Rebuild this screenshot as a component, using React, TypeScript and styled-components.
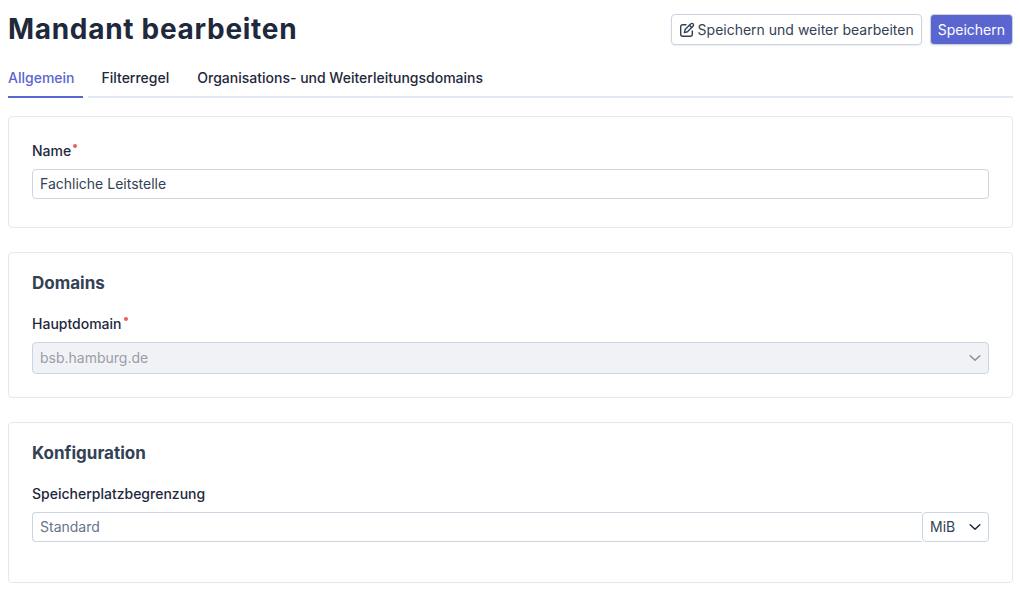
import React from 'react';
import styled, { createGlobalStyle, css } from 'styled-components';

const color = {
  primary: '#5b65d0',
  ink: '#1e293b',
  text: '#334155',
  muted: '#64748b',
  line: '#e2e8f0',
  border: '#cbd5e1',
  disabled: '#f1f2f6',
};

const GlobalStyle = createGlobalStyle`
  *, *::before, *::after { box-sizing: border-box; }
  body {
    margin: 0;
    background: #fff;
    color: ${color.ink};
    font-family: Inter, "Liberation Sans", sans-serif;
    font-size: 14px;
    line-height: 20px;
  }
  button, input, select { font: inherit; color: inherit; margin: 0; }
`;

const Page = styled.main`
  padding: 8px 7px 10px 8px;
`;

const Header = styled.header`
  display: flex;
  align-items: center;
  justify-content: space-between;
  height: 43px;
`;

const Title = styled.h1`
  margin: 0;
  font-size: 28px;
  line-height: 37px;
  font-weight: 700;
  letter-spacing: 0.025em;
`;

const Actions = styled.div`
  display: flex;
  gap: 8px;
`;

const Button = styled.button<{ $primary?: boolean }>`
  display: inline-flex;
  align-items: center;
  gap: 3px;
  height: 31px;
  padding: 0 7px;
  border: 1px solid ${color.border};
  border-radius: 4px;
  background: #fff;
  color: ${color.text};
  box-shadow: 0 1px 2px rgba(0, 0, 0, 0.08);
  white-space: nowrap;
  cursor: pointer;
  ${(p) =>
    p.$primary &&
    css`
      background: ${color.primary};
      color: #fff;
    `}
`;

const Tabs = styled.nav`
  display: flex;
  gap: 5px;
  margin-top: 9px;
  margin-bottom: 18px;
`;

const TabGroup = styled.div`
  display: flex;
  flex: 1;
  gap: 28px;
  padding-left: 14px;
  border-bottom: 2px solid ${color.line};
`;

const Tab = styled.a<{ $active?: boolean }>`
  padding: 8px 0;
  font-weight: 500;
  color: ${color.ink};
  text-decoration: none;
  ${(p) =>
    p.$active &&
    css`
      padding-right: 8px;
      color: ${color.primary};
      border-bottom: 2px solid ${color.primary};
    `}
`;

const Form = styled.form`
  display: flex;
  flex-direction: column;
  gap: 24px;
`;

const Card = styled.section<{ $roomy?: boolean }>`
  padding: 16px 23px ${(p) => (p.$roomy ? 28 : 23)}px;
  border: 1px solid ${color.line};
  border-radius: 4px;
`;

const CardTitle = styled.h2`
  margin: 0 0 9px;
  font-size: 17px;
  line-height: 28px;
  font-weight: 700;
  color: ${color.text};
`;

const Label = styled.label`
  display: flex;
  gap: 2px;
  padding: 8px 0;
  font-weight: 500;
`;

const Required = styled.span`
  width: 4px;
  height: 4px;
  margin-top: 3px;
  border-radius: 50%;
  background: #e8615c;
`;

const fieldStyle = css`
  width: 100%;
  height: 30px;
  padding: 0 7px;
  border: 1px solid ${color.border};
  border-radius: 4px;
  background: #fff;
  color: ${color.text};
`;

const Input = styled.input<{ $joined?: boolean }>`
  ${fieldStyle}
  display: block;
  flex: 1;
  min-width: 0;
  padding-bottom: 1px;
  ${(p) => p.$joined && 'border-right: 0; border-radius: 4px 0 0 4px;'}
  &::placeholder { color: ${color.muted}; opacity: 1; }
`;

const SelectBox = styled.div<{ $narrow?: boolean }>`
  display: grid;
  align-items: center;
  ${(p) => p.$narrow && 'width: 67px;'}
  > * { grid-area: 1 / 1; }
  > svg {
    justify-self: end;
    margin-right: 7px;
    pointer-events: none;
    color: #1f2937;
  }
  > select:disabled + svg { color: #8b8f99; }
`;

const Select = styled.select`
  ${fieldStyle}
  appearance: none;
  &:disabled {
    height: 32px;
    background: ${color.disabled};
    color: #989ea9;
    opacity: 1;
  }
`;

const InputGroup = styled.div`
  display: flex;
`;

const Hint = styled.div`
  height: 12px;
`;

const EditIcon = () => (
  <svg width="16" height="16" viewBox="0 0 16 16" fill="none" stroke="currentColor" strokeWidth="1.4" strokeLinecap="round" strokeLinejoin="round" aria-hidden="true">
    <path d="M7 2.7H3.7a2 2 0 0 0-2 2v7.6a2 2 0 0 0 2 2h7.6a2 2 0 0 0 2-2V9" />
    <path d="M11.7 1.9a1.6 1.6 0 0 1 2.4 2.2L8.5 9.8 5.4 10.6 6.1 7.5z" />
    <path d="M10.4 3.3l2.3 2.2" />
  </svg>
);

const ChevronIcon = () => (
  <svg width="14" height="14" viewBox="0 0 14 14" fill="none" stroke="currentColor" strokeWidth="1.5" strokeLinecap="round" strokeLinejoin="round" aria-hidden="true">
    <path d="M2.2 4.7 7 9.3l4.8-4.6" />
  </svg>
);

export default function App() {
  return (
    <>
      <GlobalStyle />
      <Page>
        <Header>
          <Title>Mandant bearbeiten</Title>
          <Actions>
            <Button type="submit" form="tenant">
              <EditIcon />
              Speichern und weiter bearbeiten
            </Button>
            <Button type="submit" form="tenant" $primary>
              Speichern
            </Button>
          </Actions>
        </Header>
        <Tabs>
          <Tab href="#allgemein" $active aria-current="page">Allgemein</Tab>
          <TabGroup>
            <Tab href="#filterregel">Filterregel</Tab>
            <Tab href="#domains">Organisations- und Weiterleitungsdomains</Tab>
          </TabGroup>
        </Tabs>
        <Form id="tenant" onSubmit={(e) => e.preventDefault()}>
          <Card $roomy>
            <Label htmlFor="name">
              Name
              <Required />
            </Label>
            <Input id="name" defaultValue="Fachliche Leitstelle" />
          </Card>
          <Card>
            <CardTitle>Domains</CardTitle>
            <Label htmlFor="domain">
              Hauptdomain
              <Required />
            </Label>
            <SelectBox>
              <Select id="domain" disabled>
                <option>bsb.hamburg.de</option>
              </Select>
              <ChevronIcon />
            </SelectBox>
          </Card>
          <Card $roomy>
            <CardTitle>Konfiguration</CardTitle>
            <Label htmlFor="quota">Speicherplatzbegrenzung</Label>
            <InputGroup>
              <Input id="quota" placeholder="Standard" $joined />
              <SelectBox $narrow>
                <Select aria-label="Einheit" defaultValue="MiB">
                  <option>MiB</option>
                  <option>GiB</option>
                </Select>
                <ChevronIcon />
              </SelectBox>
            </InputGroup>
            <Hint />
          </Card>
        </Form>
      </Page>
    </>
  );
}
